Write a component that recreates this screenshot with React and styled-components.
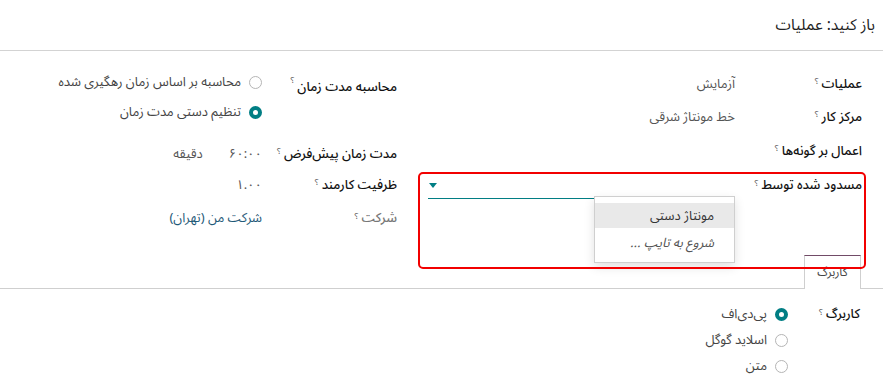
import React from "react";
import styled, { createGlobalStyle } from "styled-components";

const Global = createGlobalStyle`
  body {
    margin: 0;
    background: #fff;
    font-family: "Noto Sans Arabic", "Noto Naskh Arabic", "Vazirmatn", "DejaVu Sans", sans-serif;
    color: #212529;
  }
`;

const Page = styled.div`
  direction: rtl;
  width: 883px;
  height: 379px;
  overflow: hidden;
  position: relative;
`;

const Header = styled.div`
  height: 51px;
  border-bottom: 1px solid #d3d3d3;
  padding: 9px 8px 0;
  box-sizing: border-box;
  font-size: 15.5px;
  color: #222;
`;

const Sheet = styled.div`
  position: relative;
  padding: 16px 21px 0 20px;
  display: grid;
  grid-template-columns: 434px 1fr;
  column-gap: 31px;
`;

const Group = styled.div`
  display: grid;
  grid-template-columns: ${(p) => p.$label}px 1fr;
  align-content: start;
`;

const Label = styled.div`
  height: ${(p) => p.$h}px;
  display: flex;
  align-items: ${(p) => (p.$top ? "flex-start" : "center")};
  padding-top: ${(p) => (p.$top ? "6px" : "0")};
  box-sizing: border-box;
  font-size: 13px;
  font-weight: 500;
  color: ${(p) => (p.$muted ? "#777" : "#111")};
  white-space: nowrap;
`;

const Help = styled.sup`
  font-size: 9px;
  font-weight: 400;
  color: #555;
  margin-right: 3px;
  position: relative;
  top: -2px;
`;

const Value = styled.div`
  height: ${(p) => p.$h}px;
  display: flex;
  align-items: ${(p) => (p.$top ? "flex-start" : "center")};
  font-size: 13px;
  color: #555;
  position: relative;
`;

const RadioList = styled.div`
  display: flex;
  flex-direction: column;
`;

const RadioRow = styled.div`
  height: ${(p) => p.$h}px;
  display: flex;
  align-items: center;
  gap: 8px;
  font-size: 13px;
  color: #444;
`;

const Radio = styled.span`
  width: 13px;
  height: 13px;
  border-radius: 50%;
  box-sizing: border-box;
  flex: none;
  border: ${(p) => (p.$on ? "4px solid #017e84" : "1px solid #b5b5b5")};
  background: #fff;
`;

const Duration = styled.div`
  display: flex;
  gap: 26px;
`;

const Num = styled.span`
  direction: ltr;
  unicode-bidi: isolate;
`;

const Input = styled.div`
  position: relative;
  width: 307px;
  height: 31px;
  border-bottom: 1px solid #017e84;
  box-sizing: border-box;
`;

const Caret = styled.span`
  position: absolute;
  left: 1px;
  top: 15px;
  width: 0;
  height: 0;
  border-left: 4px solid transparent;
  border-right: 4px solid transparent;
  border-top: 5px solid #017e84;
`;

const Dropdown = styled.div`
  position: absolute;
  right: 0;
  top: 28px;
  width: 139px;
  background: #fff;
  border: 1px solid #cfcfcf;
  box-shadow: 0 4px 10px rgba(0, 0, 0, 0.12);
  padding: 6px 0 5px;
  z-index: 2;
`;

const Option = styled.div`
  height: 25px;
  display: flex;
  align-items: center;
  padding-right: 20px;
  font-size: 13px;
  color: ${(p) => (p.$hint ? "#555" : "#333")};
  font-style: ${(p) => (p.$hint ? "italic" : "normal")};
  background: ${(p) => (p.$active ? "#e9e9e9" : "transparent")};
  margin-bottom: 2px;
`;

const Highlight = styled.div`
  position: absolute;
  left: 418px;
  top: 121px;
  width: 448px;
  height: 97px;
  border: 2.5px solid #f20000;
  border-radius: 5px;
  box-sizing: border-box;
  pointer-events: none;
  z-index: 3;
`;

const Tabs = styled.div`
  margin-top: 18px;
  height: 34px;
  border-bottom: 1px solid #cfcfcf;
  padding-right: 22px;
  display: flex;
  align-items: flex-end;
`;

const Tab = styled.div`
  width: 57px;
  height: 34px;
  box-sizing: border-box;
  border: 1px solid #cfcfcf;
  border-top-color: #714b67;
  border-bottom: none;
  background: #fff;
  margin-bottom: -1px;
  display: flex;
  align-items: center;
  justify-content: center;
  font-size: 12px;
  color: #444;
`;

const TabBody = styled.div`
  padding: 12px 23px 0;
  display: grid;
  grid-template-columns: 72px 1fr;
  align-content: start;
`;

const Link = styled.span`
  color: #1f5a78;
`;

export default function App() {
  return (
    <Page>
      <Global />
      <Header>باز کنید: عملیات</Header>
      <Sheet>
        <Group $label={127}>
          <Label $h={33}>
            عملیات<Help>؟</Help>
          </Label>
          <Value $h={33}>آزمایش</Value>
          <Label $h={33}>
            مرکز کار<Help>؟</Help>
          </Label>
          <Value $h={33}>خط مونتاژ شرقی</Value>
          <Label $h={35}>
            اعمال بر گونه‌ها<Help>؟</Help>
          </Label>
          <Value $h={35} />
          <Label $h={34}>
            مسدود شده توسط<Help>؟</Help>
          </Label>
          <Value $h={34} $top>
            <Input>
              <Caret />
              <Dropdown>
                <Option $active>مونتاژ دستی</Option>
                <Option $hint>شروع به تایپ ...</Option>
              </Dropdown>
            </Input>
          </Value>
        </Group>
        <Group $label={135}>
          <Label $h={71} $top>
            محاسبه مدت زمان<Help>؟</Help>
          </Label>
          <Value $h={71} $top>
            <RadioList>
              <RadioRow $h={30}>
                <Radio />
                محاسبه بر اساس زمان رهگیری شده
              </RadioRow>
              <RadioRow $h={30}>
                <Radio $on />
                تنظیم دستی مدت زمان
              </RadioRow>
            </RadioList>
          </Value>
          <Label $h={31}>
            مدت زمان پیش‌فرض<Help>؟</Help>
          </Label>
          <Value $h={31}>
            <Duration>
              <Num>۶۰:۰۰</Num>
              <span>دقیقه</span>
            </Duration>
          </Value>
          <Label $h={31}>
            ظرفیت کارمند<Help>؟</Help>
          </Label>
          <Value $h={31}>
            <Num>۱.۰۰</Num>
          </Value>
          <Label $h={36} $muted>
            شرکت<Help>؟</Help>
          </Label>
          <Value $h={36}>
            <Link>شرکت من (تهران)</Link>
          </Value>
        </Group>
        <Highlight />
      </Sheet>
      <Tabs>
        <Tab>کاربرگ</Tab>
      </Tabs>
      <TabBody>
        <Label $h={26}>
          کاربرگ<Help>؟</Help>
        </Label>
        <RadioList>
          <RadioRow $h={26}>
            <Radio $on />
            پی‌دی‌اف
          </RadioRow>
          <RadioRow $h={26}>
            <Radio />
            اسلاید گوگل
          </RadioRow>
          <RadioRow $h={26}>
            <Radio />
            متن
          </RadioRow>
        </RadioList>
      </TabBody>
    </Page>
  );
}
